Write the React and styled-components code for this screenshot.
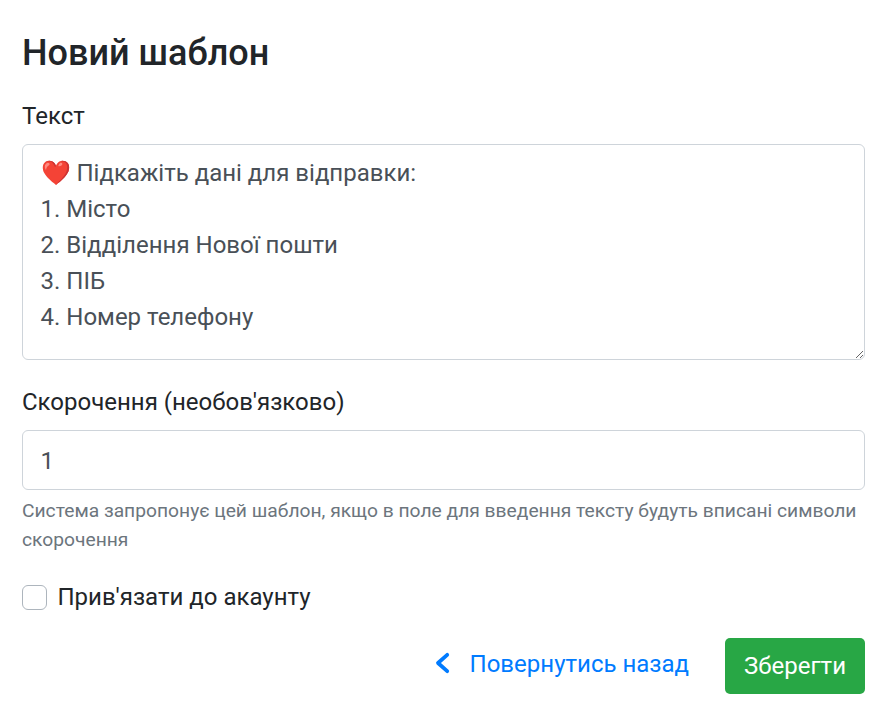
import React from 'react';
import styled, { createGlobalStyle } from 'styled-components';

const GlobalStyle = createGlobalStyle`
  html, body {
    margin: 0;
    padding: 0;
    background: #fff;
  }
  * {
    box-sizing: border-box;
  }
`;

const TEMPLATE_TEXT = `❤️ Підкажіть дані для відправки:
1. Місто
2. Відділення Нової пошти
3. ПІБ
4. Номер телефону`;

const App = () => {
  return (
    <Page>
      <GlobalStyle />
      <Title>Новий шаблон</Title>
      <Field>
        <Label htmlFor='text'>Текст</Label>
        <TextArea id='text' defaultValue={TEMPLATE_TEXT} />
      </Field>
      <Field>
        <Label htmlFor='shortcut'>Скорочення (необов'язково)</Label>
        <Input id='shortcut' defaultValue='1' />
        <Hint>
          Система запропонує цей шаблон, якщо в поле для введення тексту будуть вписані символи
          скорочення
        </Hint>
      </Field>
      <CheckRow>
        <CheckBox type='checkbox' />
        <span>Прив'язати до акаунту</span>
      </CheckRow>
      <Footer>
        <BackLink href='#'>
          <svg width='16' height='24' viewBox='0 0 16 24' fill='none'>
            <path
              d='M12.2 2.8 L3 11 L12.2 19.2'
              stroke='currentColor'
              strokeWidth='3.8'
              strokeLinecap='round'
              strokeLinejoin='round'
            />
          </svg>
          Повернутись назад
        </BackLink>
        <SaveButton type='button'>Зберегти</SaveButton>
      </Footer>
    </Page>
  );
};

export default App;

const Page = styled.div`
  padding: 29px 21px 17px 22px;
  font-family: Roboto, 'Liberation Sans', sans-serif;
  font-size: 24px;
  line-height: 36px;
  color: #212529;
`;

const Title = styled.h1`
  margin: 0 0 21px;
  font-size: 36px;
  font-weight: 500;
  line-height: 48px;
`;

const Field = styled.div`
  margin-bottom: 24px;
`;

const Label = styled.label`
  display: block;
  margin-bottom: 10px;
`;

const TextArea = styled.textarea`
  display: block;
  width: 100%;
  height: 216px;
  padding: 10px 17.5px 8px;
  border: 1px solid #ced4da;
  border-radius: 6px;
  outline: none;
  resize: vertical;
  font: inherit;
  color: #495057;
`;

const Input = styled.input`
  display: block;
  width: 100%;
  height: 60px;
  padding: 11px 17.5px 9px;
  border: 1px solid #ced4da;
  border-radius: 6px;
  outline: none;
  font: inherit;
  color: #495057;
`;

const Hint = styled.small`
  display: block;
  margin-top: 6px;
  font-size: 19.24px;
  line-height: 29px;
  color: #6c757d;
`;

const CheckRow = styled.label`
  display: flex;
  align-items: center;
  gap: 10.5px;
  margin-top: 25px;
`;

const CheckBox = styled.input`
  appearance: none;
  width: 25px;
  height: 25px;
  margin: 0;
  background: #fff;
  border: 1px solid #adb5bd;
  border-radius: 6px;
`;

const Footer = styled.div`
  display: flex;
  justify-content: flex-end;
  align-items: center;
  gap: 36px;
  margin-top: 23px;
`;

const BackLink = styled.a`
  display: flex;
  align-items: center;
  gap: 19px;
  margin-top: -4px;
  color: #007bff;
  text-decoration: none;
`;

const SaveButton = styled.button`
  height: 56px;
  padding: 0 19px;
  border: 0;
  border-radius: 5px;
  background: #28a745;
  color: #fff;
  font: inherit;
`;
